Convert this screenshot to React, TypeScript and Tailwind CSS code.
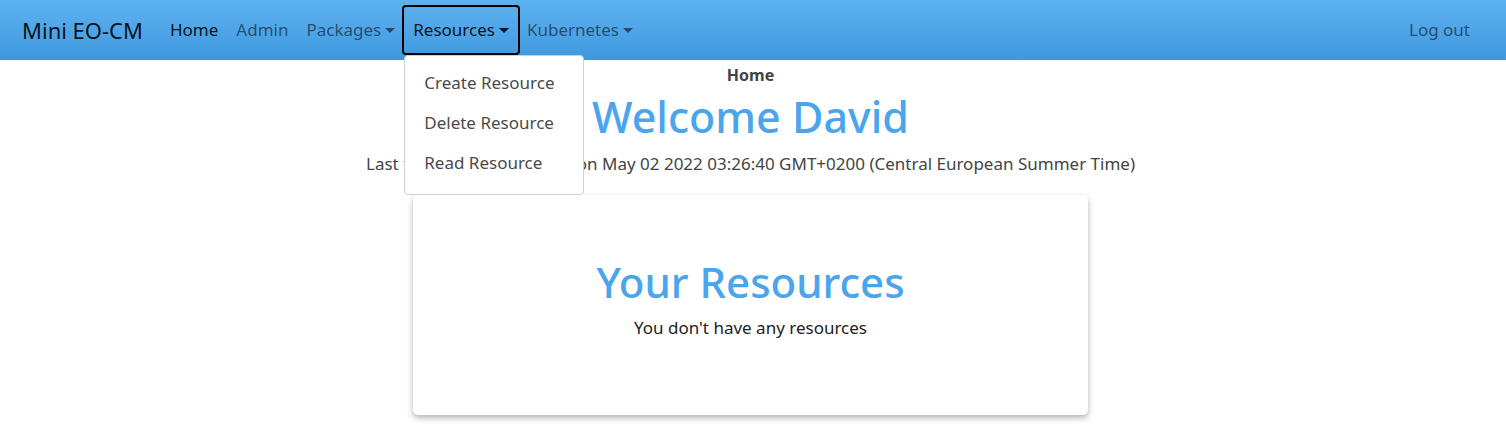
import React from "react";

const Caret = () => (
  <span className="ml-[4px] inline-block border-x-[5px] border-t-[5px] border-x-transparent border-t-current align-[3px]" />
);

export default function App() {
  return (
    <div className="min-h-[436px] bg-white" style={{ fontFamily: '"Segoe UI", "Noto Sans", "Open Sans", sans-serif' }}>
      <nav className="flex h-[60px] items-center bg-gradient-to-b from-[#5db2f0] to-[#3f98df] pl-[22px] pr-[36px]">
        <span className="mr-[18px] text-[22px] text-black/90">Mini EO-CM</span>
        <div className="flex items-center text-[17px]">
          <span className="px-[9px] text-black/90">Home</span>
          <span className="px-[9px] text-black/55">Admin</span>
          <span className="pl-[9px] pr-[7px] text-black/55">Packages<Caret /></span>
          <div className="relative">
            <span className="flex h-[50px] items-center rounded-[4px] border-2 border-black pl-[9px] pr-[9px] text-black/90">
              Resources<Caret />
            </span>
            <div className="absolute left-[2px] top-[50px] z-10 w-[180px] rounded-[4px] border border-[#d0d0d0] bg-white pb-[11px] pt-[7px] text-[#4a4a4a]">
              <div className="px-[19px] py-[8px] leading-[24px]">Create Resource</div>
              <div className="px-[19px] py-[8px] leading-[24px]">Delete Resource</div>
              <div className="px-[19px] py-[8px] leading-[24px]">Read Resource</div>
            </div>
          </div>
          <span className="px-[7px] text-black/55">Kubernetes<Caret /></span>
        </div>
        <span className="ml-auto text-[17px] text-black/55">Log out</span>
      </nav>
      <div className="flex flex-col items-center pr-[5px] text-[#444]">
        <div className="mt-[3px] text-[16px] font-bold leading-[24px]">Home</div>
        <h1 className="mt-[4px] text-[43px] font-medium leading-[52px] text-[#4aa5ec]">Welcome David</h1>
        <div className="mt-[9px] text-[17px] leading-[24px]">
          Last time you logged in: Mon May 02 2022 03:26:40 GMT+0200 (Central European Summer Time)
        </div>
        <div className="mt-[19px] flex h-[220px] w-[675px] flex-col items-center rounded-[5px] bg-white pt-[59px] shadow-[0_3px_6px_rgba(0,0,0,0.3)]">
          <h2 className="text-[42px] font-medium leading-[56px] text-[#4aa5ec]">Your Resources</h2>
          <div className="mt-[6px] text-[17px] leading-[24px] text-[#222]">You don't have any resources</div>
        </div>
      </div>
    </div>
  );
}
